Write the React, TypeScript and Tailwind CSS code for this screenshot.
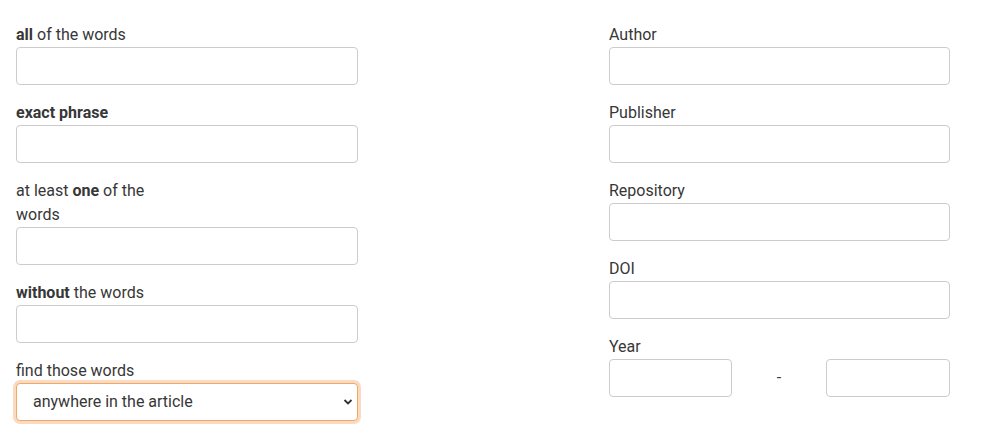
import React from "react";

const inputCls =
  "block w-full h-[38px] rounded-[4px] border border-[#cccccc] bg-white px-3 text-[16px] text-[#333] outline-none";

function Field({ label, children }: { label: React.ReactNode; children?: React.ReactNode }) {
  return (
    <div className="mb-4">
      <label className="block text-[16px] leading-6 text-[#373737]">{label}</label>
      {children ?? <input type="text" className={inputCls} />}
    </div>
  );
}

export default function App() {
  return (
    <div
      className="flex w-[999px] h-[435px] bg-white pt-[23px] pl-4"
      style={{ fontFamily: "Roboto, 'Liberation Sans', sans-serif" }}
    >
      <div className="w-[342px] shrink-0">
        <Field label={<><b className="font-bold">all</b> of the words</>} />
        <Field label={<b className="font-bold">exact phrase</b>} />
        <Field label={<span className="block w-[150px]">at least <b className="font-bold">one</b> of the words</span>} />
        <Field label={<><b className="font-bold">without</b> the words</>} />
        <Field label="find those words">
          <div className="relative">
            <select
              className="block w-full h-[38px] appearance-none rounded-[4px] border border-[#f0a868] bg-white pl-4 pr-8 text-[16px] text-[#373737] outline-none shadow-[0_0_0_3px_rgba(244,176,120,0.45)]"
              defaultValue="a"
            >
              <option value="a">anywhere in the article</option>
            </select>
            <svg
              className="pointer-events-none absolute right-[5px] top-[15px]"
              width="10"
              height="8"
              viewBox="0 0 10 8"
            >
              <path d="M1.5 2 L5 5.5 L8.5 2" fill="none" stroke="#333" strokeWidth="1.8" />
            </svg>
          </div>
        </Field>
      </div>
      <div className="ml-[251px] w-[341px] shrink-0">
        <Field label="Author" />
        <Field label="Publisher" />
        <Field label="Repository" />
        <Field label="DOI" />
        <Field label="Year">
          <div className="flex items-center">
            <input type="text" className="block h-[38px] w-[123px] rounded-[4px] border border-[#cccccc] bg-white outline-none" />
            <div className="flex-1 text-center text-[16px] text-[#373737]">-</div>
            <input type="text" className="block h-[38px] w-[124px] rounded-[4px] border border-[#cccccc] bg-white outline-none" />
          </div>
        </Field>
      </div>
    </div>
  );
}
